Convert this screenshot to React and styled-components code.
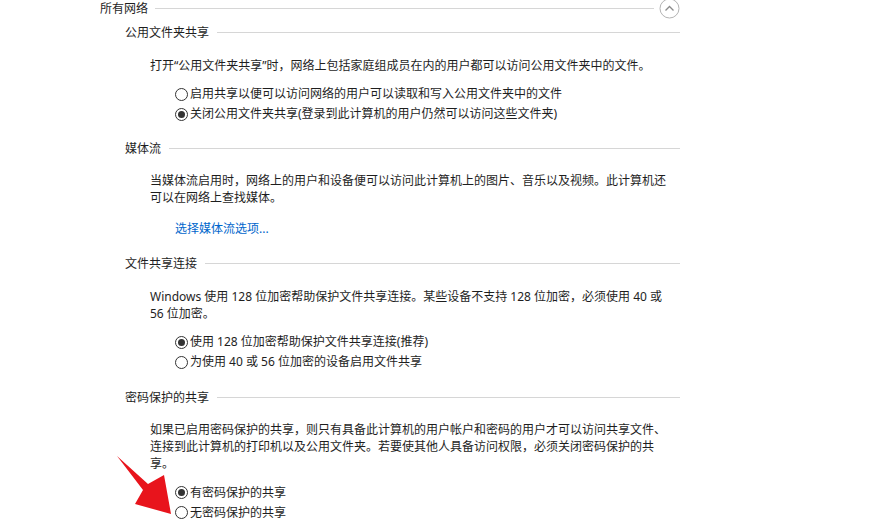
import React from "react";
import styled, { createGlobalStyle } from "styled-components";

const Global = createGlobalStyle`
  html, body {
    margin: 0;
    background: #ffffff;
  }
  body {
    font-family: "Noto Sans", "Noto Sans CJK SC", "Microsoft YaHei", sans-serif;
    font-size: 12px;
    color: #1e1e1e;
  }
`;

const Frame = styled.div`
  position: relative;
  width: 879px;
  height: 519px;
  overflow: hidden;
`;

const Page = styled.div`
  width: 580px;
  padding-left: 100px;
  margin-top: -1px;
`;

const GroupHeader = styled.div`
  display: flex;
  align-items: center;
  height: 18px;
`;

const Label = styled.span`
  white-space: nowrap;
  line-height: 17px;
`;

const Rule = styled.div`
  flex: 1;
  height: 1px;
  background: #d6d6d6;
  margin-left: ${(p) => p.$gap || 8}px;
`;

const CollapseButton = styled.button`
  width: 21px;
  height: 21px;
  margin-left: 5px;
  padding: 0;
  border: none;
  background: transparent;
  display: flex;
  align-items: center;
  justify-content: center;
`;

const Section = styled.section`
  margin-left: 25px;
  margin-top: ${(p) => p.$top}px;
`;

const SectionHeader = styled.div`
  display: flex;
  align-items: center;
  height: 17px;
`;

const Body = styled.div`
  padding-left: 25px;
`;

const Paragraph = styled.p`
  margin: ${(p) => p.$top || 15}px 0 0;
  line-height: 17px;
  white-space: nowrap;
`;

const Options = styled.div`
  margin-top: ${(p) => p.$top || 10}px;
  padding-left: 25px;
  display: flex;
  flex-direction: column;
`;

const OptionRow = styled.label`
  display: flex;
  align-items: center;
  height: 20px;
  gap: 2px;
  white-space: nowrap;
`;

const OptionText = styled.span`
  line-height: 12px;
`;

const Radio = styled.span`
  width: 11px;
  height: 11px;
  border: 1px solid #333333;
  border-radius: 50%;
  background: #ffffff;
  display: flex;
  align-items: center;
  justify-content: center;
  flex: none;
  &::after {
    content: "";
    width: 7px;
    height: 7px;
    border-radius: 50%;
    background: ${(p) => (p.$checked ? "#333333" : "transparent")};
  }
`;

const Link = styled.a`
  display: block;
  margin-top: 14px;
  margin-left: 25px;
  line-height: 17px;
  color: #0066cc;
  text-decoration: none;
  cursor: pointer;
`;

const Pointer = styled.svg`
  position: absolute;
  left: 0;
  top: 0;
  pointer-events: none;
`;

function Lines({ lines, top }) {
  return (
    <Paragraph $top={top}>
      {lines.map((l, i) => (
        <React.Fragment key={i}>
          {i > 0 && <br />}
          {l}
        </React.Fragment>
      ))}
    </Paragraph>
  );
}

function Option({ checked, children }) {
  return (
    <OptionRow>
      <Radio $checked={checked} />
      <OptionText>{children}</OptionText>
    </OptionRow>
  );
}

const sections = [
  {
    title: "公用文件夹共享",
    top: 7,
    text: [
      "打开“公用文件夹共享”时，网络上包括家庭组成员在内的用户都可以访问公用文件夹中的文件。",
    ],
    options: [
      ["启用共享以便可以访问网络的用户可以读取和写入公用文件夹中的文件", false],
      ["关闭公用文件夹共享(登录到此计算机的用户仍然可以访问这些文件夹)", true],
    ],
  },
  {
    title: "媒体流",
    top: 15.5,
    text: [
      "当媒体流启用时，网络上的用户和设备便可以访问此计算机上的图片、音乐以及视频。此计算机还",
      "可以在网络上查找媒体。",
    ],
    link: "选择媒体流选项...",
  },
  {
    title: "文件共享连接",
    top: 18,
    text: [
      "Windows 使用 128 位加密帮助保护文件共享连接。某些设备不支持 128 位加密，必须使用 40 或",
      "56 位加密。",
    ],
    options: [
      ["使用 128 位加密帮助保护文件共享连接(推荐)", true],
      ["为使用 40 或 56 位加密的设备启用文件共享", false],
    ],
  },
  {
    title: "密码保护的共享",
    top: 16.5,
    text: [
      "如果已启用密码保护的共享，则只有具备此计算机的用户帐户和密码的用户才可以访问共享文件、",
      "连接到此计算机的打印机以及公用文件夹。若要使其他人具备访问权限，必须关闭密码保护的共",
      "享。",
    ],
    options: [
      ["有密码保护的共享", true],
      ["无密码保护的共享", false],
    ],
  },
];

export default function App() {
  return (
    <>
      <Global />
      <Frame>
        <Page>
          <GroupHeader>
            <Label>所有网络</Label>
            <Rule $gap={7} />
            <CollapseButton aria-label="折叠">
              <svg width="21" height="21" viewBox="0 0 21 21">
                <circle cx="10.5" cy="10.5" r="9.5" fill="#fff" stroke="#b4b4b4" strokeWidth="1" />
                <path d="M6.5 12.5 L10.5 8.5 L14.5 12.5" fill="none" stroke="#8a8a8a" strokeWidth="1.3" />
              </svg>
            </CollapseButton>
          </GroupHeader>

          {sections.map((s) => (
            <Section key={s.title} $top={s.top}>
              <SectionHeader>
                <Label>{s.title}</Label>
                <Rule />
              </SectionHeader>
              <Body>
                <Lines lines={s.text} top={15.5} />
                {s.link && <Link>{s.link}</Link>}
                {s.options && (
                  <Options $top={10.5}>
                    {s.options.map(([t, c]) => (
                      <Option key={t} checked={c}>
                        {t}
                      </Option>
                    ))}
                  </Options>
                )}
              </Body>
            </Section>
          ))}
        </Page>

        <Pointer width="879" height="519" viewBox="0 0 879 519">
          <polygon
            points="117,456 148,484 164,475 171,514 135,504 143,490"
            fill="#e8141c"
          />
        </Pointer>
      </Frame>
    </>
  );
}
